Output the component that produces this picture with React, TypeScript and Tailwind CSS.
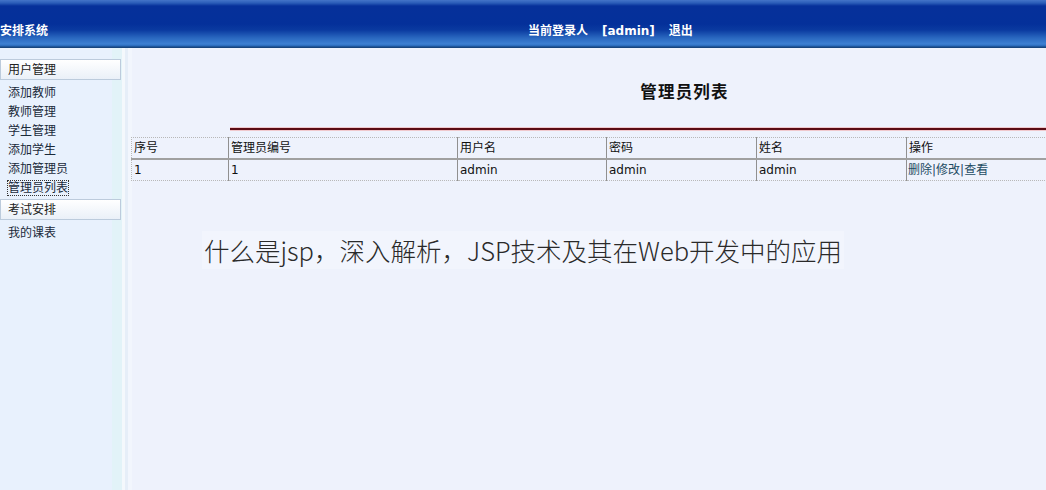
import React from 'react';

const font = { fontFamily: '"DejaVu Sans", "Noto Sans CJK SC", sans-serif' };

const menuGroups = [
  { title: '用户管理', items: ['添加教师', '教师管理', '学生管理', '添加学生', '添加管理员', '管理员列表'] },
  { title: '考试安排', items: ['我的课表'] },
];

const columns = [
  { label: '序号', w: 'w-[97px]' },
  { label: '管理员编号', w: 'w-[229px]' },
  { label: '用户名', w: 'w-[149px]' },
  { label: '密码', w: 'w-[150px]' },
  { label: '姓名', w: 'w-[150px]' },
  { label: '操作', w: 'w-[140px]' },
];

const rows = [{ id: '1', no: '1', username: 'admin', password: 'admin', name: 'admin' }];

export default function App() {
  return (
    <div className="relative h-screen w-full overflow-hidden flex flex-col bg-[#eef2fc] text-[12px]" style={font}>
      {/* Header */}
      <div className="h-[48px] shrink-0 flex items-center bg-[linear-gradient(to_bottom,#4474c8_0px,#2a5cb8_3px,#06309a_6px,#04309a_24px,#0a3aa0_30px,#2a68c0_38px,#3d80d2_44px,#2868b8_46px,#17457e_47px,#17457e_48px)] pt-[13px]">
        <div className="w-[528px] shrink-0 font-bold text-white text-[12px]">安排系统</div>
        <div className="font-bold text-white text-[12px] flex gap-[14px]">
          <span>当前登录人</span>
          <span>[admin]</span>
          <span>退出</span>
        </div>
      </div>

      <div className="flex flex-1 min-h-0">
        {/* Sidebar */}
        <div className="w-[112px] shrink-0 bg-[#e8f1fd] pt-[11px]">
          {menuGroups.map((g, gi) => (
            <div key={g.title} className={gi > 0 ? 'mt-[1px]' : ''}>
              <div className="w-[121px] h-[21px] flex items-center pl-[7px] border border-[#bccbdc] bg-[linear-gradient(to_bottom,#ffffff,#eaf0f8)] text-[#222] relative z-10">
                {g.title}
              </div>
              <div className="pt-[4px]">
                {g.items.map((it) => (
                  <div key={it} className="h-[19px] leading-[19px] pl-[8px] text-[#1a2a3a] whitespace-nowrap">
                    {it === '管理员列表' ? (
                      <span className="outline-1 outline-dotted outline-[#333]">{it}</span>
                    ) : (
                      it
                    )}
                  </div>
                ))}
              </div>
            </div>
          ))}
        </div>
        {/* Splitter */}
        <div className="w-[20px] shrink-0 flex">
          <div className="w-[10px] bg-[#e2f3f8]" />
          <div className="w-[3px] bg-[#f4f8fc]" />
          <div className="w-[3px] bg-[#e6eef8]" />
          <div className="w-[4px] bg-[#f2f6fd]" />
        </div>

        {/* Main */}
        <div className="flex-1 min-w-0 -ml-[1px]">
          <div className="h-[80px] flex items-end justify-center pb-[22px] pl-[192px]">
            <div className="font-bold text-[16.5px] text-[#111] tracking-[1.2px]">管理员列表</div>
          </div>
          <div className="ml-[99px] -mt-[1px] h-[4px] flex flex-col">
            <div className="h-[1px] bg-[#f0c8cc]" />
            <div className="h-[2px] bg-[#5a0c14]" />
            <div className="h-[1px] bg-[#f0c8cc]" />
          </div>
          <table className="mt-[6px] border-collapse border border-dotted border-[#b8b8b8] w-[916px] table-fixed">
            <thead>
              <tr className="h-[21px]">
                {columns.map((c, i) => (
                  <th
                    key={c.label}
                    className={`${c.w} text-left font-normal px-[2px] text-[#111] border-b-2 border-b-[#a0a0a0] ${i > 0 ? 'border-l border-l-[#909090]' : ''}`}
                  >
                    {c.label}
                  </th>
                ))}
              </tr>
            </thead>
            <tbody>
              {rows.map((r) => (
                <tr key={r.id} className="h-[22px]">
                  <td className="px-[2px] text-[#111]">{r.id}</td>
                  <td className="px-[2px] text-[#111] border-l border-l-[#909090]">{r.no}</td>
                  <td className="px-[2px] text-[#111] border-l border-l-[#909090]">{r.username}</td>
                  <td className="px-[2px] text-[#111] border-l border-l-[#909090]">{r.password}</td>
                  <td className="px-[2px] text-[#111] border-l border-l-[#909090]">{r.name}</td>
                  <td className="px-[1px] text-[#1d4c63] border-l border-l-[#909090] whitespace-nowrap">
                    <a className="cursor-pointer">删除</a>|<a className="cursor-pointer">修改</a>|<a className="cursor-pointer">查看</a>
                  </td>
                </tr>
              ))}
            </tbody>
          </table>
        </div>
      </div>

      {/* Watermark caption */}
      <div className="absolute left-[202px] top-[230px] h-[40px] flex items-center">
        <div
          className="px-[2px] text-[25.5px] font-light text-[#2a2a2a] bg-[#f4f7fe]/70 whitespace-nowrap"
          style={{ fontFamily: '"Noto Sans CJK SC", "Noto Sans", sans-serif' }}
        >
          什么是jsp，深入解析，JSP技术及其在Web开发中的应用
        </div>
      </div>
    </div>
  );
}
